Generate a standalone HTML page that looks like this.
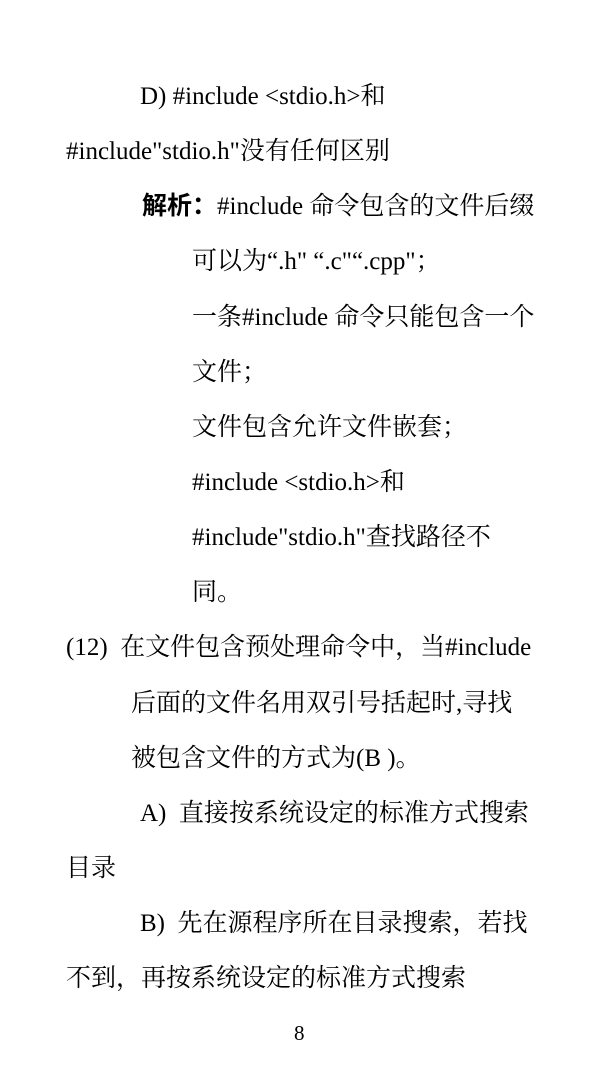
<!DOCTYPE html>
<html><head><meta charset="utf-8"><style>
body{margin:0;width:602px;height:1071px;background:#fff;position:relative;overflow:hidden;font-family:"Liberation Serif","Noto Serif CJK SC",serif;color:#000}
.l{position:absolute;font-size:25px;line-height:30px;white-space:nowrap}
b{font-family:"Liberation Serif","Noto Sans CJK SC",sans-serif;font-weight:bold}
</style></head><body>
<div class="l" style="left:140px;top:82px">D) #include &lt;stdio.h&gt;和</div>
<div class="l" style="left:66px;top:137px">#include"stdio.h"没有任何区别</div>
<div class="l" style="left:142px;top:192px"><b>解析：</b>#include 命令包含的文件后缀</div>
<div class="l" style="left:192px;top:247px">可以为“.h" “.c"“.cpp"；</div>
<div class="l" style="left:192px;top:303px">一条#include 命令只能包含一个</div>
<div class="l" style="left:192px;top:358px">文件；</div>
<div class="l" style="left:192px;top:413px">文件包含允许文件嵌套；</div>
<div class="l" style="left:192px;top:468px">#include &lt;stdio.h&gt;和</div>
<div class="l" style="left:192px;top:523px">#include"stdio.h"查找路径不</div>
<div class="l" style="left:192px;top:578px">同。</div>
<div class="l" style="left:66px;top:633px">(12)&nbsp; 在文件包含预处理命令中，当#include</div>
<div class="l" style="left:131px;top:689px">后面的文件名用双引号括起时,寻找</div>
<div class="l" style="left:131px;top:744px">被包含文件的方式为(B )。</div>
<div class="l" style="left:140px;top:799px">A)&nbsp; 直接按系统设定的标准方式搜索</div>
<div class="l" style="left:66px;top:854px">目录</div>
<div class="l" style="left:140px;top:909px">B)&nbsp; 先在源程序所在目录搜索，若找</div>
<div class="l" style="left:66px;top:964px">不到，再按系统设定的标准方式搜索</div>
<div class="l" style="left:294px;top:1018px;font-size:21px">8</div>
</body></html>
